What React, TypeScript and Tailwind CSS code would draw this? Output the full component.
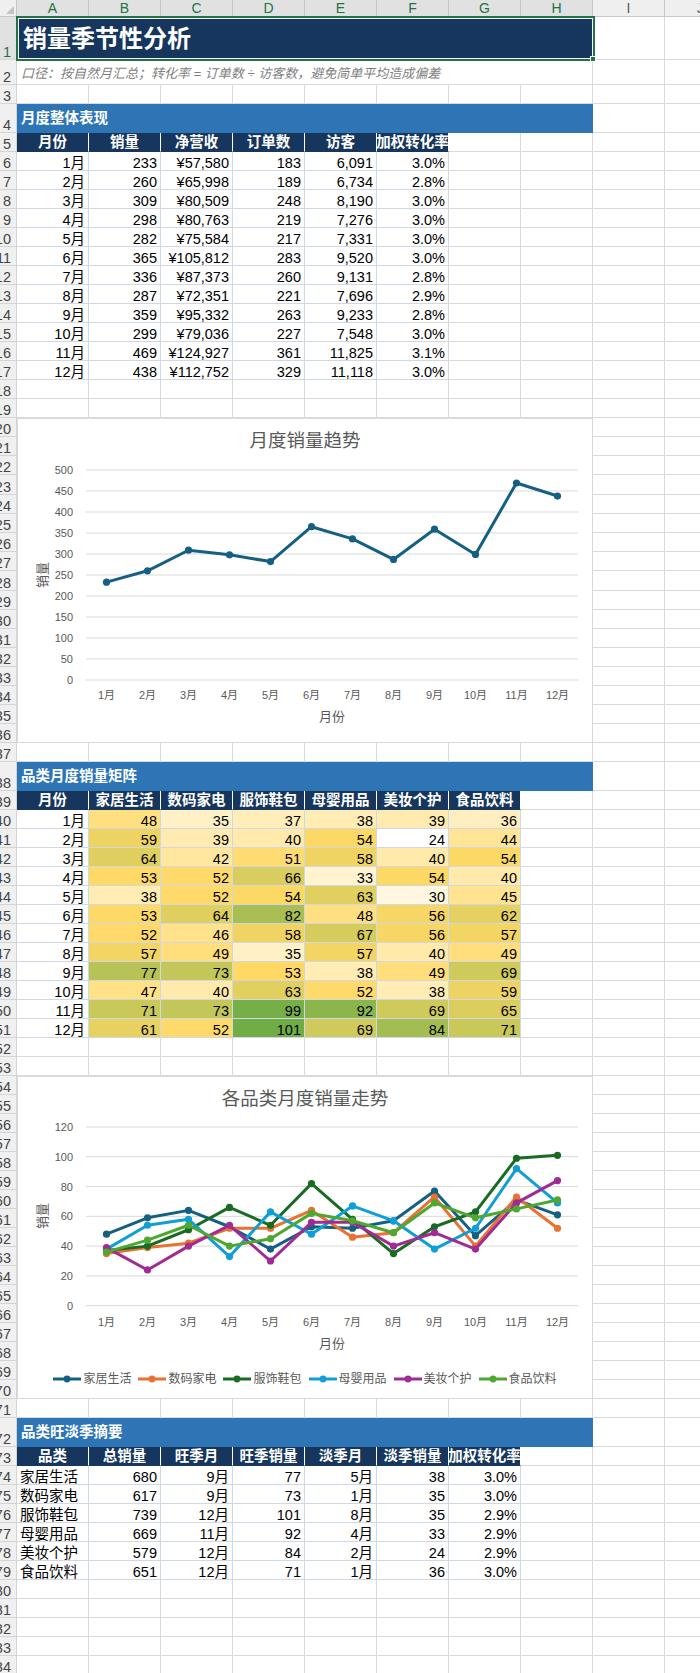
import type { ReactNode } from "react";

// row heights -> class names (written out so Tailwind picks them up)
const H: Record<number, string> = {
  17: "h-[17px]",
  19: "h-[19px]",
  20: "h-[20px]",
  25: "h-[25px]",
  29: "h-[29px]",
  43: "h-[43px]",
};

const COLS = ["A", "B", "C", "D", "E", "F", "G", "H", "I", "J"];

const monthly: (string | number)[][] = [
  ["1月", 233, "¥57,580", 183, "6,091", "3.0%"],
  ["2月", 260, "¥65,998", 189, "6,734", "2.8%"],
  ["3月", 309, "¥80,509", 248, "8,190", "3.0%"],
  ["4月", 298, "¥80,763", 219, "7,276", "3.0%"],
  ["5月", 282, "¥75,584", 217, "7,331", "3.0%"],
  ["6月", 365, "¥105,812", 283, "9,520", "3.0%"],
  ["7月", 336, "¥87,373", 260, "9,131", "2.8%"],
  ["8月", 287, "¥72,351", 221, "7,696", "2.9%"],
  ["9月", 359, "¥95,332", 263, "9,233", "2.8%"],
  ["10月", 299, "¥79,036", 227, "7,548", "3.0%"],
  ["11月", 469, "¥124,927", 361, "11,825", "3.1%"],
  ["12月", 438, "¥112,752", 329, "11,118", "3.0%"],
];

const categories = [
  { name: "家居生活", color: "#156082" },
  { name: "数码家电", color: "#E97132" },
  { name: "服饰鞋包", color: "#196B24" },
  { name: "母婴用品", color: "#0F9ED5" },
  { name: "美妆个护", color: "#A02B93" },
  { name: "食品饮料", color: "#4EA72E" },
];

const matrix = [
  [48, 35, 37, 38, 39, 36],
  [59, 39, 40, 54, 24, 44],
  [64, 42, 51, 58, 40, 54],
  [53, 52, 66, 33, 54, 40],
  [38, 52, 54, 63, 30, 45],
  [53, 64, 82, 48, 56, 62],
  [52, 46, 58, 67, 56, 57],
  [57, 49, 35, 57, 40, 49],
  [77, 73, 53, 38, 49, 69],
  [47, 40, 63, 52, 38, 59],
  [71, 73, 99, 92, 69, 65],
  [61, 52, 101, 69, 84, 71],
];

const summary: (string | number)[][] = [
  ["家居生活", 680, "9月", 77, "5月", 38, "3.0%"],
  ["数码家电", 617, "9月", 73, "1月", 35, "3.0%"],
  ["服饰鞋包", 739, "12月", 101, "8月", 35, "2.9%"],
  ["母婴用品", 669, "11月", 92, "4月", 33, "2.9%"],
  ["美妆个护", 579, "12月", 84, "2月", 24, "2.9%"],
  ["食品饮料", 651, "12月", 71, "1月", 36, "3.0%"],
];

const months = monthly.map((r) => r[0] as string);

// 3-colour scale: white (min) -> gold (median) -> green (max)
function heat(v: number) {
  const min = 24, mid = 53, max = 101;
  const lo = [255, 255, 255], md = [255, 217, 102], hi = [112, 173, 71];
  let a = lo, b = md, t = 0;
  if (v <= mid) t = (v - min) / (mid - min);
  else { a = md; b = hi; t = (v - mid) / (max - mid); }
  const c = a.map((x, i) => Math.round(x + (b[i] - x) * t));
  return `rgb(${c[0]}, ${c[1]}, ${c[2]})`;
}

function RowHead({ n, h, sel = false }: { n: number; h: number; sel?: boolean }) {
  return (
    <div
      className={`${H[h]} w-[17px] shrink-0 overflow-hidden flex items-end justify-end pr-[5px] border-r border-b border-[#d4d4d4] ${
        sel ? "bg-[#e1e1e1] text-[#217346]" : "bg-[#f0f0f0] text-[#444444]"
      }`}
    >
      <span className="shrink-0 whitespace-nowrap text-[14.5px] leading-[13px]">{n}</span>
    </div>
  );
}

function Blank() {
  return <div className="w-[72px] shrink-0 border-r border-b border-[#dadada]" />;
}

function Row({ n, h = 19, used = 0, sel, children }: { n: number; h?: number; used?: number; sel?: boolean; children?: ReactNode }) {
  return (
    <div className={`flex ${H[h]}`}>
      <RowHead n={n} h={h} sel={sel} />
      {children}
      {Array.from({ length: 10 - used }).map((_, i) => (
        <Blank key={i} />
      ))}
    </div>
  );
}

function Td({ children, left = false, bg }: { children: ReactNode; left?: boolean; bg?: string }) {
  return (
    <div
      className={`w-[72px] shrink-0 flex items-end whitespace-nowrap border-r border-b border-[#d0d7e5] text-[14.5px] leading-[13px] text-black ${
        left ? "justify-start pl-[3px]" : "justify-end pr-[3px]"
      }`}
      style={bg ? { backgroundColor: bg } : undefined}
    >
      {children}
    </div>
  );
}

function Th({ children }: { children: ReactNode }) {
  return (
    <div className="w-[72px] shrink-0 flex items-center justify-center whitespace-nowrap bg-[#17365D] border-r border-r-white border-b border-b-[#17365D] text-white font-bold text-[14.5px] leading-[15px]">
      {children}
    </div>
  );
}

function Section({ children }: { children: ReactNode }) {
  return (
    <div className="w-[576px] shrink-0 flex items-center pl-[4px] bg-[#2E75B6] text-white font-bold text-[14.5px] leading-[15px]">
      {children}
    </div>
  );
}

function ChartBlock({ start, heights, children }: { start: number; heights: number[]; children: ReactNode }) {
  return (
    <div className="flex">
      <div className="flex flex-col">
        {heights.map((h, i) => (
          <RowHead key={i} n={start + i} h={h} />
        ))}
      </div>
      <div className="w-[576px] shrink-0 flex flex-col border border-[#d9d9d9] bg-white">{children}</div>
      <div className="flex flex-col">
        {heights.map((h, i) => (
          <div key={i} className={`flex ${H[h]}`}>
            <Blank />
            <Blank />
          </div>
        ))}
      </div>
    </div>
  );
}

const gx = (i: number) => 89.5 + i * 41;

function Axis({ ticks, gy, labelY, unitY, titleY }: { ticks: number[]; gy: (v: number) => number; labelY: number; unitY: number; titleY: number }) {
  return (
    <g fill="#595959">
      {ticks.map((t) => (
        <g key={t}>
          <line x1={69} x2={561} y1={gy(t)} y2={gy(t)} stroke="#d9d9d9" strokeWidth={1} />
          <text x={56} y={gy(t)} fontSize={11} textAnchor="end" dominantBaseline="central">
            {t}
          </text>
        </g>
      ))}
      {months.map((m, i) => (
        <text key={m} x={gx(i)} y={labelY} fontSize={11} textAnchor="middle" dominantBaseline="central">
          {m}
        </text>
      ))}
      <text x={315} y={titleY} fontSize={13} textAnchor="middle" dominantBaseline="central">
        月份
      </text>
      <text x={25} y={unitY} fontSize={13} textAnchor="middle" dominantBaseline="central" transform={`rotate(-90 25 ${unitY})`}>
        销量
      </text>
    </g>
  );
}

function Series({ data, color, gy }: { data: number[]; color: string; gy: (v: number) => number }) {
  const pts = data.map((v, i) => `${gx(i)},${gy(v)}`).join(" ");
  return (
    <g>
      <polyline points={pts} fill="none" stroke={color} strokeWidth={3} strokeLinejoin="round" strokeLinecap="round" />
      {data.map((v, i) => (
        <circle key={i} cx={gx(i)} cy={gy(v)} r={3.6} fill={color} />
      ))}
    </g>
  );
}

function SalesChart() {
  const gy = (v: number) => 52 + (500 - v) * 0.42;
  const sales = monthly.map((r) => r[1] as number);
  return (
    <>
      <div className="h-[44px] shrink-0 flex items-center justify-center text-[18.5px] text-[#595959]">月度销量趋势</div>
      <svg width={574} height={279} viewBox="1 45 574 279">
        <Axis ticks={[0, 50, 100, 150, 200, 250, 300, 350, 400, 450, 500]} gy={gy} labelY={277} unitY={157} titleY={298} />
        <Series data={sales} color="#156082" gy={gy} />
      </svg>
    </>
  );
}

function CategoryChart() {
  const gy = (v: number) => 51 + (120 - v) * 1.489;
  return (
    <>
      <div className="h-[44px] shrink-0 flex items-center justify-center text-[18.5px] text-[#595959]">各品类月度销量走势</div>
      <svg width={574} height={235} viewBox="1 45 574 235">
        <Axis ticks={[0, 20, 40, 60, 80, 100, 120]} gy={gy} labelY={245.7} unitY={140} titleY={267} />
        {categories.map((c, ci) => (
          <Series key={c.name} data={matrix.map((r) => r[ci])} color={c.color} gy={gy} />
        ))}
      </svg>
      <div className="flex-1 flex items-center justify-center gap-[7px] pt-[4px]">
        {categories.map((c) => (
          <div key={c.name} className="flex items-center">
            <svg width={28} height={8} viewBox="0 0 28 8">
              <line x1={0} x2={28} y1={4} y2={4} stroke={c.color} strokeWidth={3} />
              <circle cx={14} cy={4} r={3.4} fill={c.color} />
            </svg>
            <span className="ml-[2px] text-[12px] leading-[14px] text-[#595959]">{c.name}</span>
          </div>
        ))}
      </div>
    </>
  );
}

export default function App() {
  const chart1Rows = [19, 19, 19, 20, 19, 19, 19, 19, 20, 19, 19, 19, 19, 19, 19, 19, 19];
  const chart2Rows = Array.from({ length: 17 }, () => 19);

  return (
    <div className="relative w-[700px] h-[1673px] overflow-hidden bg-white font-['Liberation_Sans','Noto_Sans_CJK_SC',sans-serif]">
      {/* column header */}
      <div className="flex h-[17px]">
        <div className="w-[17px] shrink-0 bg-[#efefef] border-r border-b border-[#c8c8c8] flex items-end justify-end p-[2px]">
          <svg width={8} height={8} viewBox="0 0 8 8">
            <polygon points="8,0 8,8 0,8" fill="#c4c4c4" />
          </svg>
        </div>
        {COLS.map((c, i) => (
          <div
            key={c}
            className={`w-[72px] shrink-0 flex items-center justify-center border-r border-b border-[#c8c8c8] text-[14px] leading-[15px] ${
              i < 8 ? "bg-[#e1e1e1] text-[#217346]" : "bg-[#efefef] text-[#5a5a5a]"
            }`}
          >
            {c}
          </div>
        ))}
      </div>

      <Row n={1} h={43} used={8} sel>
        <div className="w-[576px] shrink-0 flex items-center pl-[6px] bg-[#17365D] text-white font-bold text-[24px] leading-[28px]">
          销量季节性分析
        </div>
      </Row>
      <Row n={2} h={25} used={8}>
        <div className="w-[576px] shrink-0 flex items-end pl-[4px] pb-[3px] border-r border-b border-[#dadada] text-[13px] leading-[15px] italic text-[#7f7f7f] whitespace-nowrap">
          口径：按自然月汇总；转化率 = 订单数 ÷ 访客数，避免简单平均造成偏差
        </div>
      </Row>
      <Row n={3} />
      <Row n={4} h={29} used={8}>
        <Section>月度整体表现</Section>
      </Row>
      <Row n={5} used={6}>
        {["月份", "销量", "净营收", "订单数", "访客", "加权转化率"].map((t) => (
          <Th key={t}>{t}</Th>
        ))}
      </Row>
      {monthly.map((r, i) => (
        <Row key={i} n={6 + i} used={6}>
          {r.map((v, j) => (
            <Td key={j}>{v}</Td>
          ))}
        </Row>
      ))}
      <Row n={18} />
      <Row n={19} />

      <ChartBlock start={20} heights={chart1Rows}>
        <SalesChart />
      </ChartBlock>

      <Row n={37} />
      <Row n={38} h={29} used={8}>
        <Section>品类月度销量矩阵</Section>
      </Row>
      <Row n={39} used={7}>
        {["月份", ...categories.map((c) => c.name)].map((t) => (
          <Th key={t}>{t}</Th>
        ))}
      </Row>
      {matrix.map((r, i) => (
        <Row key={i} n={40 + i} used={7}>
          <Td>{months[i]}</Td>
          {r.map((v, j) => (
            <Td key={j} bg={heat(v)}>
              {v}
            </Td>
          ))}
        </Row>
      ))}
      <Row n={52} />
      <Row n={53} />

      <ChartBlock start={54} heights={chart2Rows}>
        <CategoryChart />
      </ChartBlock>

      <Row n={71} />
      <Row n={72} h={29} used={8}>
        <Section>品类旺淡季摘要</Section>
      </Row>
      <Row n={73} used={7}>
        {["品类", "总销量", "旺季月", "旺季销量", "淡季月", "淡季销量", "加权转化率"].map((t) => (
          <Th key={t}>{t}</Th>
        ))}
      </Row>
      {summary.map((r, i) => (
        <Row key={i} n={74 + i} used={7}>
          {r.map((v, j) => (
            <Td key={j} left={j === 0}>
              {v}
            </Td>
          ))}
        </Row>
      ))}
      {[80, 81, 82, 83, 84].map((n) => (
        <Row key={n} n={n} />
      ))}

      {/* active selection A1:H1 */}
      <div className="absolute left-[16px] top-[16px] w-[579px] h-[45px] border-2 border-[#217346] shadow-[inset_0_0_0_1px_#ffffff]">
        <div className="absolute -right-[3px] -bottom-[3px] w-[6px] h-[6px] bg-[#217346] border border-white" />
      </div>
    </div>
  );
}
